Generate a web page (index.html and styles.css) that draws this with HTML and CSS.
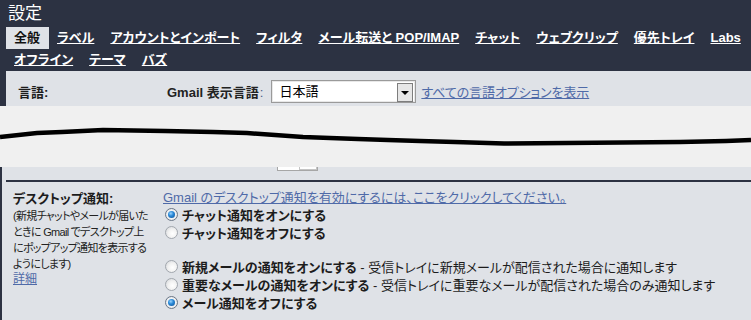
FILE: index.html
```html
<!DOCTYPE html>
<html lang="ja">
<head>
<meta charset="utf-8">
<title>設定</title>
<link rel="stylesheet" href="styles.css">
</head>
<body>
<div class="header">
  <div class="title">設定</div>
  <div class="tabs">
    <span class="tab active">全般</span>
    <a class="tab" href="#">ラベル</a>
    <a class="tab" href="#">アカウントとインポート</a>
    <a class="tab" href="#">フィルタ</a>
    <a class="tab" href="#">メール転送と POP/IMAP</a>
    <a class="tab" href="#">チャット</a>
    <a class="tab" href="#">ウェブクリップ</a>
    <a class="tab" href="#">優先トレイ</a>
    <a class="tab" href="#">Labs</a>
  </div>
  <div class="tabs">
    <a class="tab" href="#">オフライン</a>
    <a class="tab" href="#">テーマ</a>
    <a class="tab" href="#">バズ</a>
  </div>
</div>

<div class="panel panel-top">
  <div class="lang-row">
    <div class="row-label">言語:</div>
    <span class="field-label">Gmail 表示言語<span class="colon">:</span></span>
    <span class="select"><span class="sel-text">日本語</span><span class="sel-btn"><span class="tri"></span></span></span>
    <a class="link lang-link" href="#">すべての言語オプションを表示</a>
  </div>
</div>

<div class="torn">
  <svg class="wave" width="751" height="61" viewBox="0 0 751 61">
    <polyline points="0,31 37,27 62,26 103,24 165,25 213,26 247,27 275,29 303,31 330,32 358,33 388,34 420,35 455,36 504,37.5 680,36 726,35 751,34" fill="none" stroke="#000" stroke-width="4.5"/>
  </svg>
</div>

<div class="panel panel-bottom">
  <div class="remnant"><span class="rem-box"><span class="rem-btn"></span></span></div>
  <div class="divider"></div>
  <div class="section">
    <div class="sec-left">
      <div class="sec-title">デスクトップ通知:</div>
      <div class="sec-desc">(新規チャットやメールが届いた<br>ときに Gmail でデスクトップ上<br>にポップアップ通知を表示する<br>ようにします)</div>
      <a class="link detail" href="#">詳細</a>
    </div>
    <div class="sec-right">
      <a class="link enable-link" href="#">Gmail のデスクトップ通知を有効にするには、ここをクリックしてください。</a>
      <div class="opt"><span class="radio checked"></span><b>チャット通知をオンにする</b></div>
      <div class="opt"><span class="radio"></span><b>チャット通知をオフにする</b></div>
      <div class="spacer"></div>
      <div class="opt"><span class="radio"></span><b>新規メールの通知をオンにする</b><span class="note"> - 受信トレイに新規メールが配信された場合に通知します</span></div>
      <div class="opt"><span class="radio"></span><b>重要なメールの通知をオンにする</b><span class="note"> - 受信トレイに重要なメールが配信された場合のみ通知します</span></div>
      <div class="opt"><span class="radio checked"></span><b>メール通知をオフにする</b></div>
    </div>
  </div>
</div>
</body>
</html>
```

FILE: styles.css
```css
html, body {
  margin: 0;
  height: 320px;
  overflow: hidden;
}
body {
  background: #2c3242;
  font-family: "Liberation Sans", "Noto Sans CJK JP", sans-serif;
  font-feature-settings: "palt";
  font-size: 13px;
  color: #1c1c1c;
}

.header {
  height: 71px;
}
.title {
  height: 27px;
  line-height: 27px;
  padding-left: 8px;
  font-size: 17px;
  color: #fff;
}
.tabs {
  display: flex;
  height: 22px;
  margin-left: 6px;
}
.tab {
  padding: 0 8px;
  line-height: 22px;
  font-weight: bold;
  color: #fff;
  text-decoration: underline;
  white-space: nowrap;
}
.tab.active {
  background: #dfe2e7;
  color: #111;
  text-decoration: none;
  padding: 0 9px 0 8px;
}

.panel {
  background: #dfe2e7;
}
.panel-top {
  margin-left: 6px;
  height: 35px;
}
.lang-row {
  display: flex;
  align-items: center;
  padding-top: 9px;
  padding-left: 12px;
  height: 23px;
}
.row-label {
  width: 149px;
  font-weight: bold;
}
.field-label {
  font-weight: bold;
  color: #222;
}
.colon {
  color: #4a5c88;
  font-weight: normal;
  margin-left: 1px;
}
.select {
  display: flex;
  box-sizing: border-box;
  width: 145px;
  height: 23px;
  margin-left: 8px;
  background: #fff;
  border: 1px solid #9a9a9a;
  box-shadow: inset 0 0 0 1px #e8e8e8;
  padding: 1px;
}
.sel-text {
  flex: 1;
  padding-left: 6px;
  line-height: 19px;
  font-size: 13px;
  color: #000;
}
.sel-btn {
  width: 14px;
  height: 17px;
  margin-top: 1px;
  margin-right: 1px;
  background: #e6e6e6;
  border: 1px solid #7d7d7d;
  display: flex;
  align-items: center;
  justify-content: center;
}
.tri {
  width: 0;
  height: 0;
  border-left: 4px solid transparent;
  border-right: 4px solid transparent;
  border-top: 4px solid #000;
}
.link {
  color: #4f6aa8;
  text-decoration: underline;
}
.lang-link {
  margin-left: 5px;
  letter-spacing: -0.1px;
}

.torn {
  height: 61px;
  background: #f0f0f0;
}
.wave {
  display: block;
}

.panel-bottom {
  margin-left: 2px;
  height: 153px;
}
.remnant {
  height: 13px;
}
.rem-box {
  display: flex;
  justify-content: flex-end;
  box-sizing: border-box;
  width: 41px;
  height: 4px;
  margin-left: 275px;
  background: #fff;
  border: 1px solid #a6a6a6;
  border-top: none;
}
.rem-btn {
  width: 16px;
  height: 2px;
  border: 1px solid #c4c4c4;
  border-top: none;
  background: #fff;
}
.divider {
  height: 2px;
  margin-left: 4px;
  background: #2c3242;
}

.section {
  display: flex;
  padding-top: 8px;
  padding-left: 11px;
}
.sec-left {
  width: 150px;
  flex: none;
}
.sec-title {
  font-weight: bold;
  line-height: 18px;
  font-size: 13px;
}
.sec-desc {
  font-size: 11px;
  line-height: 16px;
  white-space: nowrap;
  letter-spacing: -0.7px;
  color: #222;
}
.detail {
  display: block;
  font-size: 12px;
  line-height: 14px;
  width: max-content;
}
.sec-right {
  flex: 1;
}
.enable-link {
  display: block;
  line-height: 15px;
  width: max-content;
}
.opt {
  display: flex;
  align-items: center;
  height: 18px;
  white-space: nowrap;
}
.opt b {
  font-weight: bold;
}
.note {
  font-weight: normal;
  white-space: pre;
}
.spacer {
  height: 16px;
}
.radio {
  box-sizing: border-box;
  width: 13px;
  height: 13px;
  margin-left: 2px;
  margin-right: 4px;
  border-radius: 50%;
  border: 1px solid #a2a7ae;
  background: radial-gradient(circle at 60% 60%, #ffffff 0, #f2f2f2 45%, #cfd2d6 100%);
  flex: none;
  position: relative;
}
.radio.checked {
  border-color: #6b7686;
  background: radial-gradient(circle at 50% 50%, #ffffff 0, #eef0f2 60%, #c9ccd1 100%);
}
.radio.checked::after {
  content: "";
  position: absolute;
  left: 2px;
  top: 2px;
  width: 7px;
  height: 7px;
  border-radius: 50%;
  background: radial-gradient(circle at 40% 35%, #9ad4ff 0, #2b8ad8 40%, #0b4f94 100%);
}
```
